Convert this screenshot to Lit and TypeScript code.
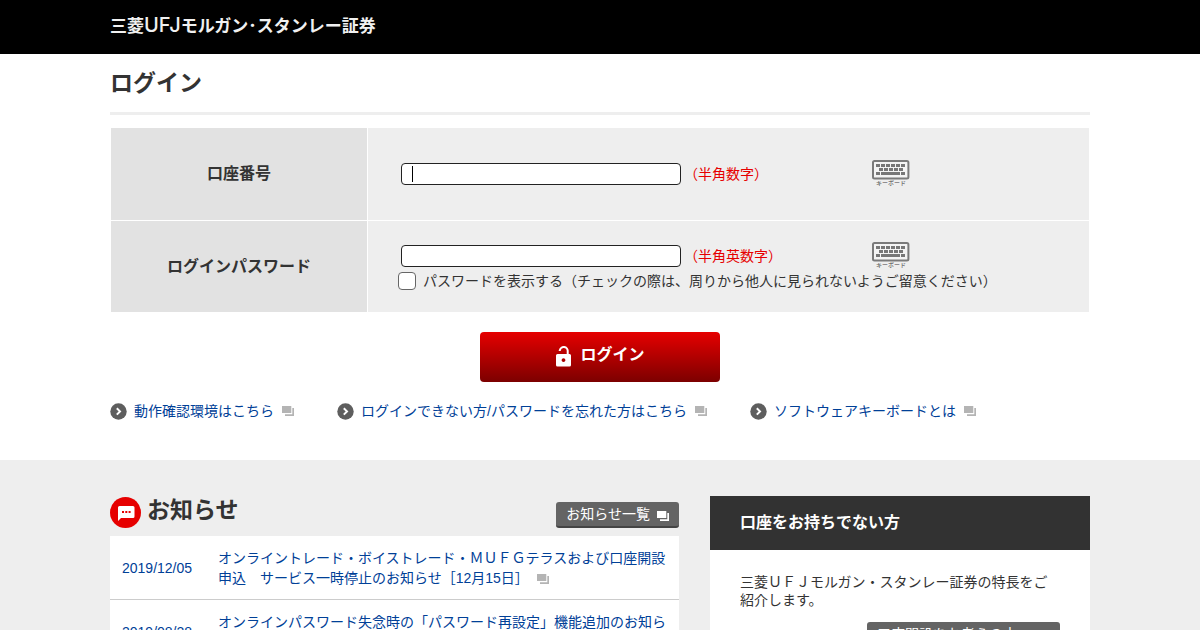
import { LitElement, html, css, svg } from "lit";
import { customElement, state } from "lit/decorators.js";

const newWindow = html`<svg class="win" viewBox="0 0 12 10" width="12" height="10" aria-hidden="true">
  <path d="M0 0h9.3v7H0z M10.3 2H12v8H3V8.3h7.3z" fill="currentColor" />
</svg>`;

const arrow = html`<svg width="17" height="17" viewBox="0 0 17 17" aria-hidden="true">
  <circle cx="8.5" cy="8.5" r="8.2" fill="#5e5e5e" />
  <path d="M6.8 5.2l3.2 3.2-3.2 3.2" fill="none" stroke="#fff" stroke-width="2" />
</svg>`;

const keyRow = (y: number, keys: number[][]) =>
  keys.map(([x, w]) => svg`<rect x=${x} y=${y} width=${w} height="3" fill="#777" />`);

const keyboard = html`<svg width="38" height="20" viewBox="0 0 38 20" aria-hidden="true">
  <rect x="1" y="1" width="35.4" height="17.4" rx="1.5" fill="#f4f4f4" stroke="#7a7a7a" stroke-width="2" />
  ${keyRow(4, [[4, 4], [9, 4], [14, 4], [19, 4], [24, 4], [29, 4]])}
  ${keyRow(8, [[7, 4], [12, 4], [17, 4], [22, 4], [27, 4]])}
  ${keyRow(12, [[4, 4], [9, 19], [29, 4]])}
</svg>`;

@customElement("app-root")
export class AppRoot extends LitElement {
  @state() private showPassword = false;

  private guides = ["動作確認環境はこちら", "ログインできない方/パスワードを忘れた方はこちら", "ソフトウェアキーボードとは"];

  private news = [
    {
      date: "2019/12/05",
      text: "オンライントレード・ボイストレード・ＭＵＦＧテラスおよび口座開設申込　サービス一時停止のお知らせ［12月15日］",
    },
    { date: "2019/08/28", text: "オンラインパスワード失念時の「パスワード再設定」機能追加のお知らせ" },
  ];

  static styles = css`
    :host {
      display: block;
      height: 100vh;
      overflow: hidden;
      background: #fff;
      color: #333;
      font: 14px/20px "Liberation Sans", "Noto Sans CJK JP", sans-serif;
    }
    * {
      box-sizing: border-box;
    }
    h1,
    h2,
    p,
    ul {
      margin: 0;
      padding: 0;
    }
    ul {
      list-style: none;
    }
    a {
      color: #004097;
      text-decoration: none;
    }
    svg {
      display: block;
      flex: none;
    }
    .wrap {
      max-width: 980px;
      margin: 0 auto;
    }
    .top {
      background: #000;
      color: #fff;
      height: 54px;
    }
    .logo {
      display: flex;
      align-items: center;
      height: 50px;
      font: bold 17px/24px "Noto Sans CJK JP", sans-serif;
      color: #f0f0f0;
    }
    .logo .latin {
      font: 500 20px/24px Inter, sans-serif;
    }
    h1 {
      padding: 13px 0;
      border-bottom: 3px solid #eee;
      font-size: 23px;
      line-height: 32px;
    }
    table {
      width: 100%;
      margin-top: 12px;
      border-spacing: 1px;
      table-layout: fixed;
    }
    th {
      width: 256px;
      padding: 0;
      background: #e2e2e2;
      font-size: 16px;
    }
    td {
      height: 92px;
      padding: 0 30px;
      background: #eee;
    }
    tr + tr td {
      height: 91px;
      padding-top: 2px;
    }
    .field {
      position: relative;
      display: flex;
      align-items: center;
      padding-left: 3px;
      height: 22px;
    }
    .field input {
      width: 280px;
      height: 22px;
      padding: 0 10px;
      border: 1px solid #222;
      border-radius: 4px;
      background: #fff;
      font: inherit;
      outline: none;
      caret-color: transparent;
    }
    .caret {
      position: absolute;
      left: 14px;
      top: 3px;
      width: 1px;
      height: 16px;
      background: #000;
    }
    .hint {
      width: 191px;
      padding-left: 3px;
      color: #e60000;
    }
    .keys {
      align-self: flex-start;
      margin-top: -3px;
      font-size: 6px;
      line-height: 7px;
      text-align: center;
      color: #444;
    }
    .show {
      display: flex;
      align-items: center;
      gap: 7px;
      margin-top: 4px;
      white-space: nowrap;
    }
    .show input {
      appearance: none;
      width: 18px;
      height: 18px;
      margin: 0;
      border: 1px solid #666;
      border-radius: 4px;
      background: #fff;
    }
    .show input:checked {
      background: #333;
    }
    .submit {
      display: flex;
      align-items: center;
      justify-content: center;
      gap: 8px;
      width: 240px;
      height: 50px;
      margin: 19px auto;
      padding: 0 0 4px;
      border: 0;
      border-radius: 4px;
      background: linear-gradient(#e60000, #7c0000);
      color: #fff;
      font: bold 16px/24px "Liberation Sans", "Noto Sans CJK JP", sans-serif;
    }
    .submit svg {
      margin-top: 2px;
    }
    .guides {
      display: flex;
      flex-wrap: wrap;
      gap: 0 43px;
      padding-bottom: 39px;
    }
    .guides a {
      display: flex;
      align-items: center;
      gap: 7px;
    }
    .win {
      color: #b4b4b4;
      margin-left: 1px;
    }
    .lower {
      background: #eee;
      padding-top: 36px;
      min-height: 240px;
    }
    .cols {
      display: grid;
      grid-template-columns: minmax(0, 569fr) minmax(0, 380fr);
      gap: 31px;
      align-items: start;
    }
    .head {
      display: flex;
      align-items: flex-start;
      height: 40px;
      gap: 6px;
    }
    .head h2 {
      flex: 1;
      font-size: 23px;
      line-height: 28px;
    }
    .head > svg {
      margin-top: 1px;
    }
    .more {
      display: flex;
      align-items: center;
      gap: 6px;
      height: 26px;
      padding: 0 10px;
      border-bottom: 2px solid #444;
      border-radius: 3px;
      background: #646464;
      color: #fff;
    }
    .more .win {
      color: #fff;
      margin-top: 4px;
    }
    .head .more {
      margin-top: 6px;
    }
    .news {
      background: #fff;
    }
    .news a {
      display: grid;
      grid-template-columns: 96px 1fr;
      align-items: center;
      padding: 12px 12px 11px;
      border-bottom: 1px solid #ccc;
    }
    .news .win {
      display: inline-block;
      margin-left: 8px;
      vertical-align: -1px;
    }
    .card {
      background: #fff;
    }
    .card h2 {
      padding: 15px 30px;
      background: #323232;
      color: #fff;
      font-size: 16px;
      line-height: 24px;
    }
    .body {
      display: flex;
      flex-direction: column;
      align-items: flex-end;
      gap: 13px;
      padding: 23px 30px;
      line-height: 18px;
    }
  `;

  render() {
    return html`
      <header class="top">
        <div class="wrap logo">三菱<span class="latin">UFJ</span>モルガン･スタンレー証券</div>
      </header>
      <main>
        <form class="wrap" @submit=${(e: Event) => e.preventDefault()}>
          <h1>ログイン</h1>
          <table>
            <tr>
              <th><label for="account">口座番号</label></th>
              <td>
                <div class="field">
                  <input id="account" type="text" autocomplete="off" /><span class="caret"></span>
                  <span class="hint">（半角数字）</span>
                  <a class="keys" href="#">${keyboard}キーボード</a>
                </div>
              </td>
            </tr>
            <tr>
              <th><label for="password">ログインパスワード</label></th>
              <td>
                <div class="field">
                  <input id="password" type=${this.showPassword ? "text" : "password"} />
                  <span class="hint">（半角英数字）</span>
                  <a class="keys" href="#">${keyboard}キーボード</a>
                </div>
                <label class="show">
                  <input
                    type="checkbox"
                    .checked=${this.showPassword}
                    @change=${(e: Event) => (this.showPassword = (e.target as HTMLInputElement).checked)}
                  />パスワードを表示する（チェックの際は、周りから他人に見られないようご留意ください）
                </label>
              </td>
            </tr>
          </table>
          <button class="submit">
            <svg width="17" height="21" viewBox="0 0 17 21" aria-hidden="true">
              <path d="M4.7 4.9V4.6a4 4 0 0 1 8 1V9" fill="none" stroke="#fff" stroke-width="2" />
              <path fill-rule="evenodd" fill="#fff" d="M2.5 8h12a1.5 1.5 0 0 1 1.5 1.5V19a1.5 1.5 0 0 1-1.5 1.5h-12A1.5 1.5 0 0 1 1 19V9.5A1.5 1.5 0 0 1 2.5 8z M8.5 12.2a1.9 1.9 0 1 0 .01 0z" />
            </svg>
            ログイン
          </button>
          <nav class="guides">
            ${this.guides.map((g) => html`<a href="#">${arrow}<span>${g}</span>${newWindow}</a>`)}
          </nav>
        </form>
        <div class="lower">
          <div class="wrap cols">
            <section>
              <div class="head">
                <svg width="31" height="31" viewBox="0 0 31 31" aria-hidden="true">
                  <circle cx="15.5" cy="15.5" r="15.5" fill="#e60000" />
                  <path d="M9.5 9H23a1.5 1.5 0 0 1 1.5 1.5v9A1.5 1.5 0 0 1 23 21H11l-3 3V10.5A1.5 1.5 0 0 1 9.5 9z" fill="#fff" />
                  <path d="M12 14h2v2h-2z M15.3 14h2v2h-2z M18.6 14h2v2h-2z" fill="#e60000" />
                </svg>
                <h2>お知らせ</h2>
                <a class="more" href="#">お知らせ一覧${newWindow}</a>
              </div>
              <ul class="news">
                ${this.news.map(
                  (n) => html`<li>
                    <a href="#"><time>${n.date}</time><span>${n.text}${newWindow}</span></a>
                  </li>`
                )}
              </ul>
            </section>
            <section class="card">
              <h2>口座をお持ちでない方</h2>
              <div class="body">
                <p>三菱ＵＦＪモルガン・スタンレー証券の特長をご紹介します。</p>
                <a class="more" href="#">口座開設をお考えの方へ${newWindow}</a>
              </div>
            </section>
          </div>
        </div>
      </main>
    `;
  }
}
